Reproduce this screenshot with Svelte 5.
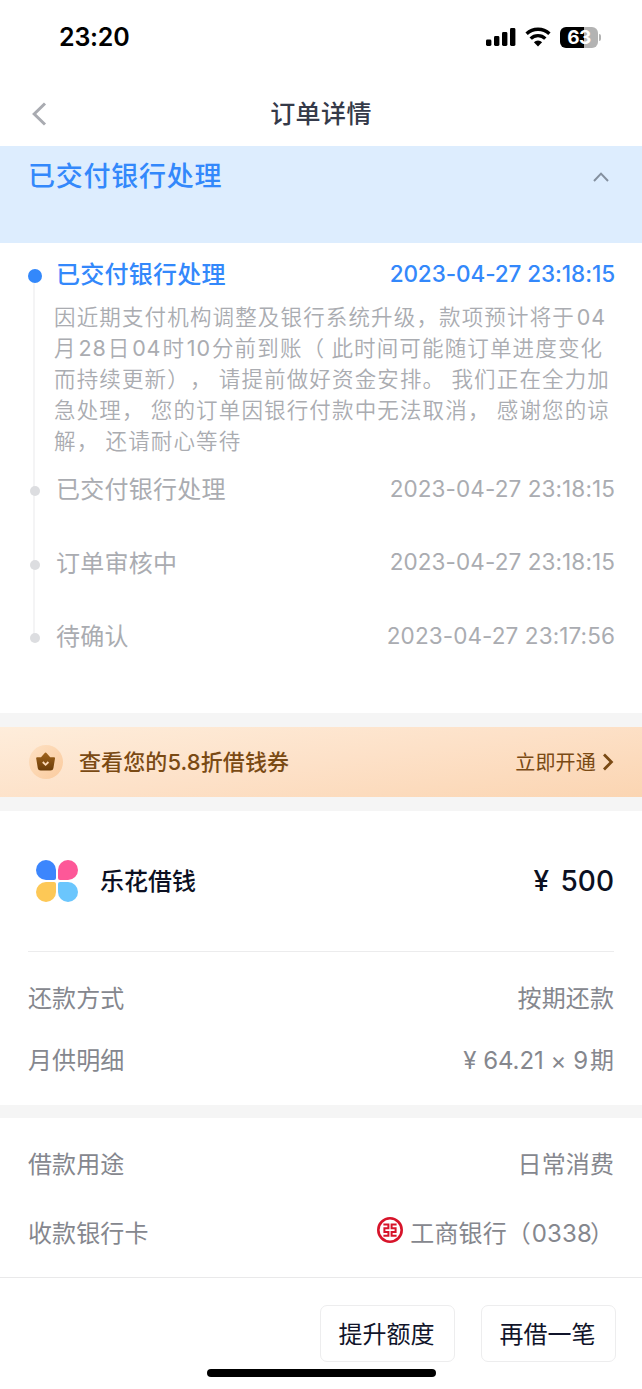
<script lang="ts">
  type Step = { title: string; time: string };

  const detail = [
    '因近期支付机构调整及银行系统升级，款项预计将于04',
    '月28日04时10分前到账（ 此时间可能随订单进度变化',
    '而持续更新）， 请提前做好资金安排。 我们正在全力加',
    '急处理， 您的订单因银行付款中无法取消， 感谢您的谅',
    '解， 还请耐心等待',
  ];

  const steps: Step[] = [
    { title: '已交付银行处理', time: '2023-04-27 23:18:15' },
    { title: '订单审核中', time: '2023-04-27 23:18:15' },
    { title: '待确认', time: '2023-04-27 23:17:56' },
  ];

  let expanded = $state(true);

  // digits get a little air around them inside Chinese text
  const splitDigits = (line: string) => line.split(/(\d+)/).filter(Boolean);
</script>

<div class="page">
  <header class="statusbar">
    <span class="clock">23:20</span>
    <div class="indicators">
      <svg width="30" height="20" viewBox="0 0 30 20">
        <rect x="0" y="12.5" width="5.4" height="6.5" rx="1.4" />
        <rect x="8" y="9" width="5.4" height="10" rx="1.4" />
        <rect x="16" y="5" width="5.4" height="14" rx="1.4" />
        <rect x="24" y="1" width="5.4" height="18" rx="1.4" />
      </svg>
      <svg class="wifi" width="26" height="20" viewBox="0 0 26 20">
        <g fill="none" stroke="#000" stroke-width="3.4">
          <path d="M1.6 6.8A16.4 16.4 0 0 1 24.4 6.8" />
          <path d="M5.7 11.6A10.4 10.4 0 0 1 20.3 11.6" />
        </g>
        <path d="M13 19.4L8.9 15.3A5.8 5.8 0 0 1 17.1 15.3Z" />
      </svg>
      <div class="battery"><span>63</span></div>
      <i class="cap"></i>
    </div>
  </header>

  <nav>
    <svg class="back" width="16" height="26" viewBox="0 0 16 26">
      <path d="M14 2.5L3.2 13L14 23.5" fill="none" stroke="#a9abb1" stroke-width="3" />
    </svg>
    <h1>订单详情</h1>
  </nav>

  <button class="banner" onclick={() => (expanded = !expanded)}>
    <span>已交付银行处理</span>
    <svg width="18" height="12" viewBox="0 0 18 12">
      <path d="M2 10L9 2.6L16 10" fill="none" stroke="#84909f" stroke-width="2" />
    </svg>
  </button>

  {#if expanded}
    <section class="timeline">
      <div class="step active">
        <span class="title">已交付银行处理</span>
        <time>2023-04-27 23:18:15</time>
      </div>
      <div class="detail">
        {#each detail as line}
          <p>{#each splitDigits(line) as part}<span class:num={/^\d/.test(part)}>{part}</span>{/each}</p>
        {/each}
      </div>
      {#each steps as step}
        <div class="step">
          <span class="title">{step.title}</span>
          <time>{step.time}</time>
        </div>
      {/each}
    </section>
  {/if}

  <div class="gap"></div>
  <section class="promo">
    <svg class="crown" width="34" height="34" viewBox="0 0 34 34">
      <defs>
        <linearGradient id="disc" x1="0" y1="0" x2="1" y2="1">
          <stop offset="0" stop-color="#fde0c2" />
          <stop offset="1" stop-color="#fbcb9e" />
        </linearGradient>
        <linearGradient id="gold" x1="0" y1="0" x2="0" y2="1">
          <stop offset="0" stop-color="#a0641c" />
          <stop offset="1" stop-color="#6b3c08" />
        </linearGradient>
      </defs>
      <circle cx="17" cy="17" r="17" fill="url(#disc)" />
      <path
        d="M16.6 7.6Q17.2 7.6 17.7 8.2L21.2 12.2L25 12.2Q26.2 12.2 26 13.4L24.4 23.2Q24 25.6 21.6 25.6H11.6Q9.2 25.6 8.8 23.2L7.2 13.4Q7 12.2 8.2 12.2L12 12.2L15.5 8.2Q16 7.6 16.6 7.6Z"
        fill="url(#gold)"
      />
      <path d="M13.8 17L16.6 19.8L19.4 17" fill="none" stroke="#fcd9b6" stroke-width="1.8" />
    </svg>
    <span class="promo-text">查看您的5.8折借钱券</span>
    <span class="promo-link">立即开通</span>
    <svg width="12" height="18" viewBox="0 0 12 18">
      <path d="M2 1.6L9.4 9L2 16.4" fill="none" stroke="#7a4a14" stroke-width="2.8" />
    </svg>
  </section>
  <div class="gap"></div>

  <section class="product">
    <div class="brand">
      <div class="petals"><i></i><i></i><i></i><i></i></div>
      <span class="name">乐花借钱</span>
      <span class="amount">¥ 500</span>
    </div>
    <div class="row">
      <span>还款方式</span>
      <span>按期还款</span>
    </div>
    <div class="row">
      <span>月供明细</span>
      <span class="plan">¥ 64.21 × 9<span class="unit">期</span></span>
    </div>
  </section>
  <div class="gap short"></div>

  <section class="usage">
    <div class="row">
      <span>借款用途</span>
      <span>日常消费</span>
    </div>
    <div class="row">
      <span>收款银行卡</span>
      <span class="bank">
        <svg width="26" height="26" viewBox="0 0 26 26">
          <circle cx="13" cy="13" r="11.7" fill="none" stroke="#d7142a" stroke-width="2.6" />
          <g fill="none" stroke="#d7142a" stroke-width="2">
            <path d="M6.4 7.4H11.4V11.2H7.4V15H11.4V18.8H6.4" />
            <path d="M19.6 7.4H14.6V11.2H18.6V15H14.6V18.8H19.6" />
          </g>
        </svg>
        <span>工商银行（<span class="card">0338</span>）</span>
      </span>
    </div>
  </section>

  <footer>
    <button>提升额度</button>
    <button>再借一笔</button>
    <div class="home"></div>
  </footer>
</div>

<style>
  :global(body) {
    background: #fff;
  }
  .page {
    width: 642px;
    height: 1389px;
    overflow: hidden;
    display: flex;
    flex-direction: column;
    background: #fff;
    font-family: Inter, 'Noto Sans CJK SC', sans-serif;
    text-spacing-trim: space-all;
    color: #85878e;
    white-space: nowrap;
  }
  h1,
  p {
    margin: 0;
  }
  button {
    font-family: inherit;
    background: #fff;
    border: 0;
    padding: 0;
  }
  svg,
  i {
    display: block;
    flex: none;
  }
  .statusbar {
    height: 82px;
    box-sizing: border-box;
    padding: 22px 41px 0 59px;
    display: flex;
    justify-content: space-between;
    color: #000;
  }
  .clock {
    font-size: 25px;
    line-height: 30px;
    font-weight: 600;
    letter-spacing: -0.2px;
  }
  .indicators {
    display: flex;
    align-items: center;
    height: 30px;
  }
  .wifi {
    margin: 0 9px 0 9px;
  }
  .battery {
    width: 38px;
    height: 21px;
    border-radius: 6px;
    background: linear-gradient(90deg, #000 63%, #b3b3b3 63%);
    color: #fff;
    font-size: 19px;
    line-height: 21px;
    font-weight: 700;
    text-align: center;
    letter-spacing: -0.5px;
  }
  .cap {
    width: 2px;
    height: 7px;
    margin-left: 1px;
    border-radius: 0 2px 2px 0;
    background: #b3b3b3;
  }
  nav {
    height: 64px;
    display: grid;
    grid-template-columns: 56px 1fr 56px;
    align-items: center;
  }
  .back {
    margin-left: 31px;
  }
  h1 {
    font-size: 25px;
    line-height: 36px;
    letter-spacing: 0.4px;
    font-weight: 500;
    text-align: center;
    color: #353a49;
  }
  .banner {
    height: 97px;
    padding: 12px 32px 0 28px;
    display: flex;
    justify-content: space-between;
    align-items: flex-start;
    background: #ddedfe;
    font-size: 27px;
    line-height: 38px;
    font-weight: 500;
    letter-spacing: 0.75px;
    color: #3388fb;
  }
  .banner svg {
    margin-top: 13px;
  }
  .timeline {
    height: 470px;
    box-sizing: border-box;
    padding: 12px 27px 0 28px;
    color: #aaacb1;
    position: relative;
  }
  .timeline::before {
    content: '';
    position: absolute;
    left: 33px;
    top: 40px;
    width: 2px;
    height: 355px;
    background: #f4f4f5;
  }
  .step {
    height: 36px;
    display: flex;
    align-items: center;
    font-size: 24px;
    letter-spacing: 0.25px;
    margin-bottom: 37.5px;
    position: relative;
  }
  .step::before {
    content: '';
    width: 10px;
    height: 10px;
    margin: 6px 16px 0 2px;
    border-radius: 50%;
    background: #dcdde0;
  }
  .title {
    padding-bottom: 1px;
  }
  .step time {
    margin-left: auto;
    font-size: 22.5px;
    letter-spacing: 0.1px;
  }
  .active {
    color: #3388fb;
    font-weight: 500;
    margin-bottom: 11px;
  }
  .active::before {
    width: 14px;
    height: 14px;
    margin: 6px 14px 0 0;
    background: #3388fb;
  }
  .active time {
    letter-spacing: -0.08px;
  }
  .detail {
    margin: 0 0 13px 26px;
    font-size: 21.5px;
    line-height: 31px;
    letter-spacing: 1.15px;
    word-spacing: -1px;
    font-weight: 350;
  }
  .num {
    margin: 0 1px 0 1.8px;
    font-weight: 400;
    letter-spacing: 0.9px;
  }
  .gap {
    height: 14px;
    background: #f5f5f5;
  }
  .short {
    height: 13px;
  }
  .promo {
    height: 70px;
    box-sizing: border-box;
    padding: 0 28px 0 29px;
    display: flex;
    align-items: center;
    background: linear-gradient(172deg, #feeddb 0%, #fde1c8 50%, #fbd5b2 100%);
    color: #7a4a14;
  }
  .promo-text {
    margin-left: 16px;
    padding-bottom: 4px;
    font-size: 22px;
    font-weight: 500;
    letter-spacing: 0.1px;
  }
  .promo-link {
    margin-left: auto;
    margin-right: 6px;
    padding-bottom: 2px;
    font-size: 20px;
    letter-spacing: 0.2px;
  }
  .product {
    height: 294px;
    padding: 0 28px;
  }
  .brand {
    height: 140px;
    display: flex;
    align-items: center;
    border-bottom: 1px solid #ececed;
    color: #0c1022;
  }
  .petals {
    display: grid;
    grid-template-columns: 20px 20px;
    gap: 2px;
    margin: 0 22px 0 8px;
  }
  .petals i {
    width: 20px;
    height: 20px;
    border-radius: 10px 10px 2px 10px;
    background: #3c86fd;
  }
  .petals i:nth-child(2) {
    border-radius: 10px 10px 10px 2px;
    background: #fd5898;
  }
  .petals i:nth-child(3) {
    border-radius: 10px 2px 10px 10px;
    background: #fdc856;
  }
  .petals i:nth-child(4) {
    border-radius: 2px 10px 10px 10px;
    background: #6bc6fd;
  }
  .name {
    padding-bottom: 3px;
    font-size: 24px;
    font-weight: 500;
  }
  .amount {
    margin-left: auto;
    font-size: 28px;
    font-weight: 500;
    word-spacing: 4px;
  }
  .row {
    height: 62px;
    display: flex;
    justify-content: space-between;
    align-items: center;
    font-size: 24px;
    letter-spacing: 0.1px;
  }
  .product .row:nth-child(2) {
    margin-top: 13px;
  }
  .plan {
    letter-spacing: -0.1px;
    word-spacing: 0.3px;
  }
  .unit {
    margin-left: 2px;
  }
  .usage {
    height: 160px;
    padding: 10px 28px 0;
    box-sizing: border-box;
    border-bottom: 1px solid #e9e9ea;
  }
  .usage .row {
    height: 69px;
  }
  .bank {
    display: flex;
    align-items: center;
    gap: 7px;
  }
  .bank svg {
    margin-bottom: 3px;
  }
  .card {
    margin: 0 -2px 0 1px;
  }
  footer {
    flex: 1;
    display: flex;
    justify-content: flex-end;
    align-items: flex-start;
    gap: 26px;
    padding: 27px 26px 0;
    position: relative;
  }
  footer button {
    width: 135px;
    height: 57px;
    box-sizing: border-box;
    padding: 0 2px 3px 0;
    border: 1px solid #ededee;
    border-radius: 7px;
    font-size: 24px;
    color: #10142a;
  }
  .home {
    position: absolute;
    left: 207px;
    bottom: 12px;
    width: 229px;
    height: 8px;
    border-radius: 4px;
    background: #000;
  }
</style>
